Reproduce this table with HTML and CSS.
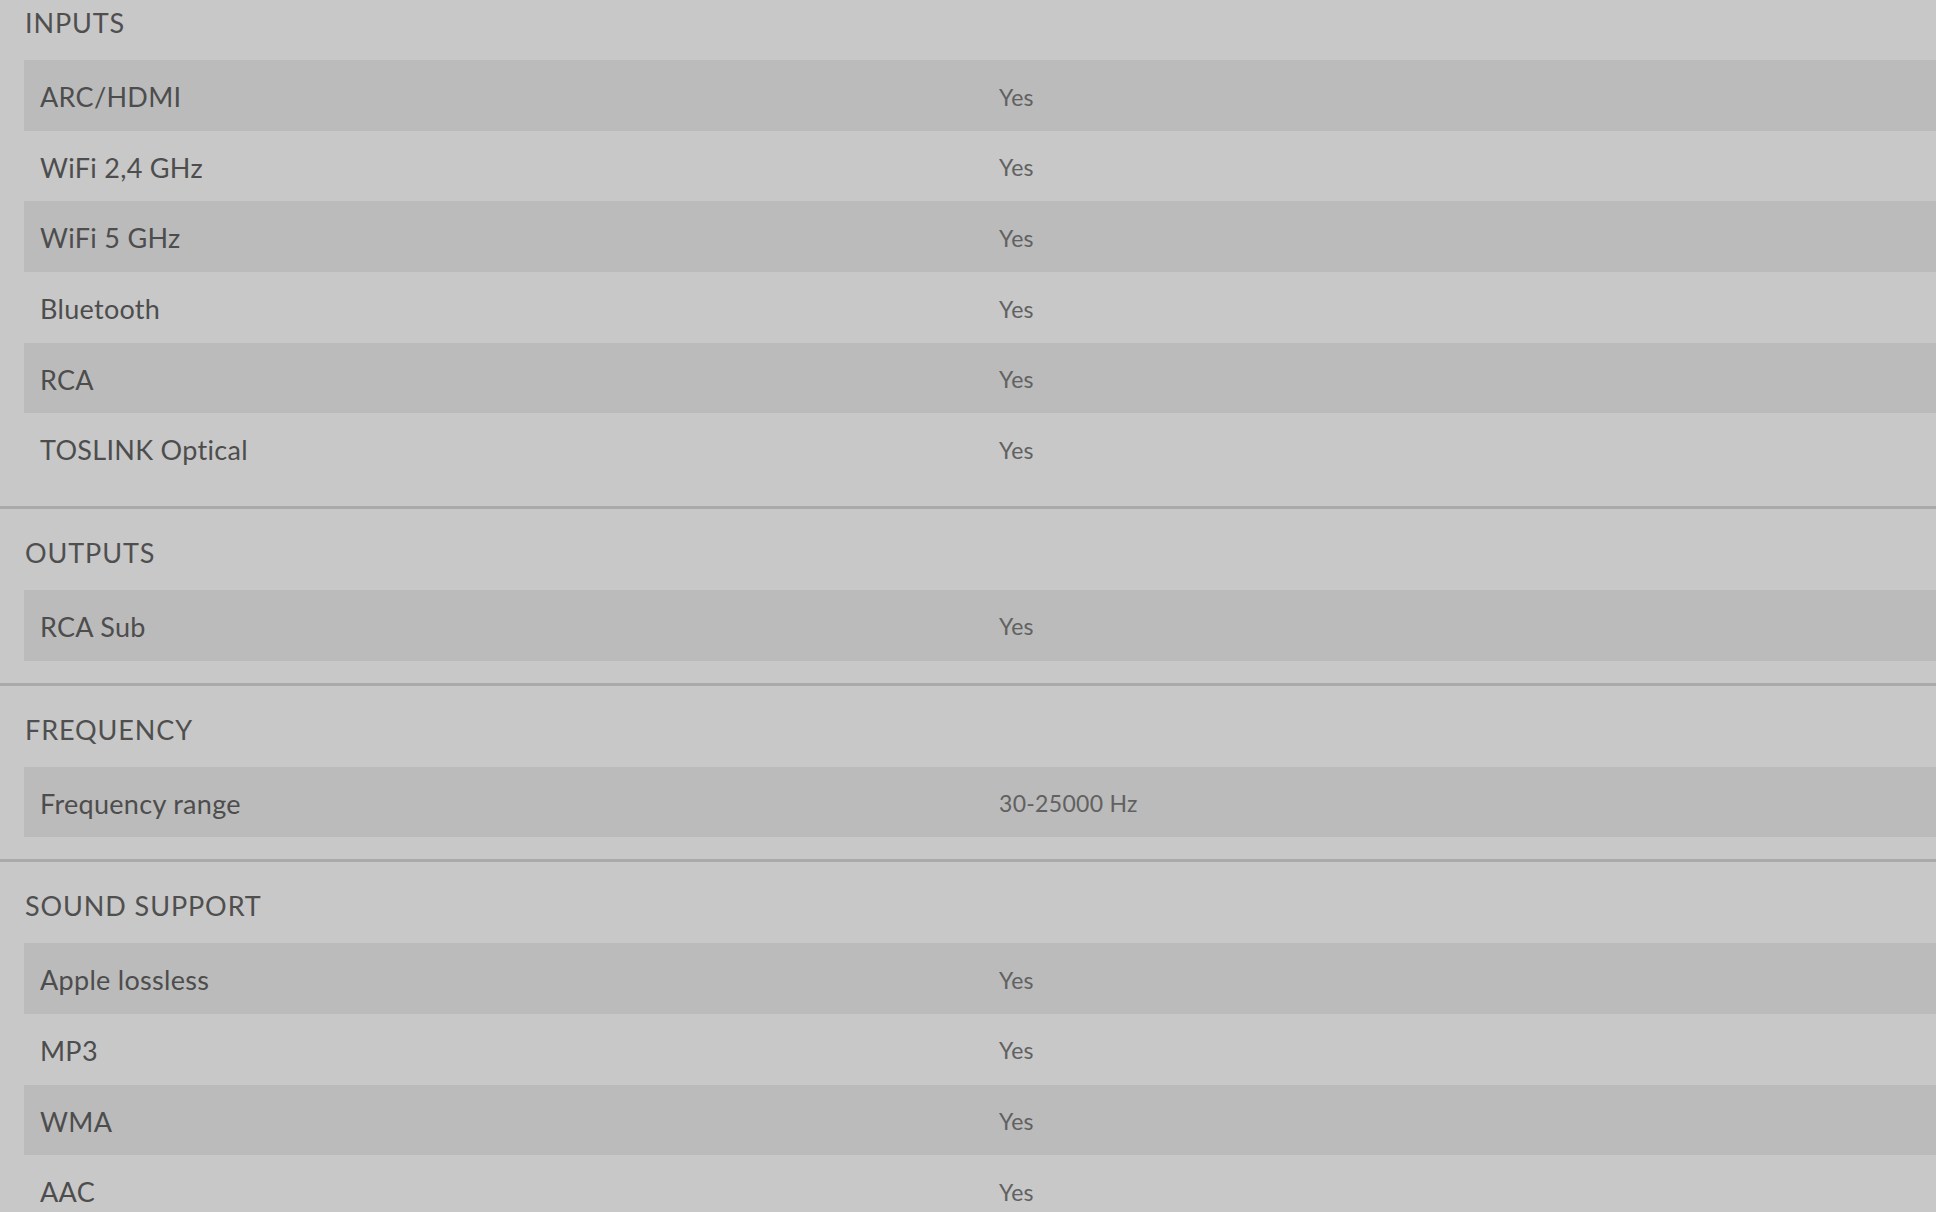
FILE: index.html
```html
<!DOCTYPE html>
<html lang="en">
<head>
<meta charset="utf-8">
<title>Specifications</title>
<link rel="stylesheet" href="styles.css">
</head>
<body>
<main class="specs">
  <section class="spec-group">
    <h2 class="spec-title">INPUTS</h2>
    <div class="spec-rows">
      <div class="spec-row"><span class="spec-label">ARC/HDMI</span><span class="spec-value">Yes</span></div>
      <div class="spec-row"><span class="spec-label">WiFi 2,4 GHz</span><span class="spec-value">Yes</span></div>
      <div class="spec-row"><span class="spec-label">WiFi 5 GHz</span><span class="spec-value">Yes</span></div>
      <div class="spec-row"><span class="spec-label">Bluetooth</span><span class="spec-value">Yes</span></div>
      <div class="spec-row"><span class="spec-label">RCA</span><span class="spec-value">Yes</span></div>
      <div class="spec-row"><span class="spec-label">TOSLINK Optical</span><span class="spec-value">Yes</span></div>
    </div>
  </section>
  <section class="spec-group">
    <h2 class="spec-title">OUTPUTS</h2>
    <div class="spec-rows">
      <div class="spec-row"><span class="spec-label">RCA Sub</span><span class="spec-value">Yes</span></div>
    </div>
  </section>
  <section class="spec-group">
    <h2 class="spec-title">FREQUENCY</h2>
    <div class="spec-rows">
      <div class="spec-row"><span class="spec-label">Frequency range</span><span class="spec-value">30-25000 Hz</span></div>
    </div>
  </section>
  <section class="spec-group">
    <h2 class="spec-title">SOUND SUPPORT</h2>
    <div class="spec-rows">
      <div class="spec-row"><span class="spec-label">Apple lossless</span><span class="spec-value">Yes</span></div>
      <div class="spec-row"><span class="spec-label">MP3</span><span class="spec-value">Yes</span></div>
      <div class="spec-row"><span class="spec-label">WMA</span><span class="spec-value">Yes</span></div>
      <div class="spec-row"><span class="spec-label">AAC</span><span class="spec-value">Yes</span></div>
    </div>
  </section>
</main>
</body>
</html>
```

FILE: styles.css
```css
html, body {
  margin: 0;
  padding: 0;
  background: #c8c8c8;
}

body {
  font-family: Lato, "Noto Sans", "Liberation Sans", sans-serif;
  color: #4f4f4f;
  overflow: hidden;
}

.specs {
  margin-top: -21px;
}

.spec-group {
  padding: 0 0 22px 24px;
  border-bottom: 3px solid #aaaaaa;
}

.spec-title {
  box-sizing: border-box;
  height: 81px;
  margin: 0;
  padding: 28px 0 0 1px;
  font-size: 27px;
  line-height: 1.2;
  font-weight: 400;
  letter-spacing: 0.9px;
  color: #4f4f4f;
}

.spec-rows {
  display: flex;
  flex-direction: column;
}

.spec-row {
  display: grid;
  grid-template-columns: 959px 1fr;
  align-items: center;
  height: 70.67px;
  padding: 4px 0 0 16px;
  box-sizing: border-box;
}

.spec-row:nth-child(odd) {
  background: #bbbbbb;
}

.spec-label {
  font-size: 27px;
  line-height: 1.2;
  letter-spacing: 0.3px;
  color: #4d4d4d;
}

.spec-value {
  font-size: 23px;
  line-height: 1.2;
  font-weight: 400;
  letter-spacing: 0.3px;
  color: #616161;
}
```
